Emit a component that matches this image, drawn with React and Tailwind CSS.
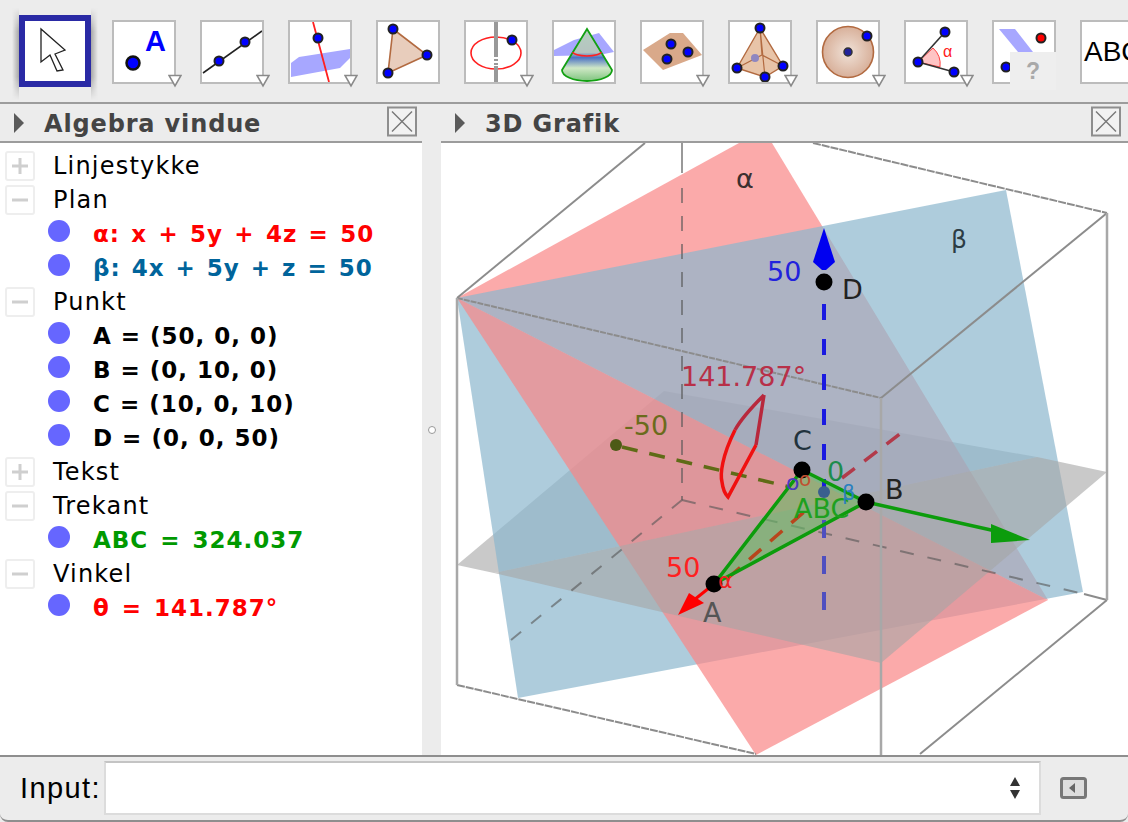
function ToolBox({ children, arrow = true, first = false }) {
  return (
    <div className={`relative w-[64px] h-[64px] shrink-0 mt-[20px] border-[2px] border-[#bcbcbc] bg-white ${first ? 'ml-[14px]' : 'ml-[24px]'}`}>
      <svg viewBox="0 0 60 60" className="w-[60px] h-[60px]">{children}</svg>
      {arrow && (
        <svg viewBox="0 0 14 14" className="absolute right-[-8px] bottom-[-6px] w-[14px] h-[14px]">
          <path d="M1 1.5H13L7 12Z" fill="#fff" stroke="#8a8a8a" strokeWidth="1.6" />
        </svg>
      )}
    </div>
  );
}

function Dot({ x, y, r = 4.5, fill = '#0000ff' }) {
  return <circle cx={x} cy={y} r={r} fill={fill} stroke="#222" strokeWidth="2" />;
}

function Tools() {
  return (
    <div className="relative h-[102px] flex items-start overflow-hidden bg-[#ececec]">
      <div className="w-[86px] h-[92px] ml-[12px] mt-[8px] shrink-0 flex items-start">
        <div className="w-[7px] h-[92px] bg-gradient-to-r from-[#ececec] to-[#a8a8a8] [mask-image:linear-gradient(to_bottom,transparent,black_25%,black_75%,transparent)]" />
        <div className="w-[72px] h-[72px] mt-[7px] shrink-0 border-[6px] border-[#2a2aa5] bg-white flex items-center justify-center">
          <svg viewBox="0 0 36 48" className="w-[36px] h-[48px]">
            <path d="M4 2V35L13 28L20 44L26 43L18 27L28 23Z" fill="#fff" stroke="#222" strokeWidth="1.3" />
          </svg>
        </div>
        <div className="w-[7px] h-[92px] bg-gradient-to-r from-[#a8a8a8] to-[#ececec] [mask-image:linear-gradient(to_bottom,transparent,black_25%,black_75%,transparent)]" />
      </div>
      <ToolBox first>
        <circle cx="19" cy="41" r="6.5" fill="#0000ff" stroke="#111" strokeWidth="2.5" />
        <text x="31" y="29" fontSize="29" fontWeight="700" fill="#0000ff" className="[font-family:'Liberation_Sans',sans-serif]">A</text>
      </ToolBox>
      <ToolBox>
        <line x1="1" y1="51" x2="60" y2="9" stroke="#222" strokeWidth="1.6" />
        <Dot x={17} y={39} />
        <Dot x={43} y={20} />
      </ToolBox>
      <ToolBox>
        <path d="M1 41L9 35L60 27V36L50 46L1 55Z" fill="#a7a7ff" />
        <line x1="23" y1="0" x2="39" y2="60" stroke="#ff2020" strokeWidth="1.8" />
        <Dot x={28} y={16} />
      </ToolBox>
      <ToolBox arrow={false}>
        <path d="M15 7L49 33L10 51Z" fill="#e8cdbc" stroke="#b26a40" strokeWidth="1.6" />
        <Dot x={15} y={7} />
        <Dot x={49} y={33} />
        <Dot x={10} y={51} />
      </ToolBox>
      <ToolBox>
        <ellipse cx="30" cy="31" rx="25" ry="16" fill="none" stroke="#ff2020" strokeWidth="1.6" />
        <line x1="30" y1="0" x2="30" y2="33" stroke="#999" strokeWidth="4" />
        <line x1="30" y1="33" x2="30" y2="44" stroke="#999" strokeWidth="4" strokeDasharray="2 2" />
        <line x1="30" y1="44" x2="30" y2="60" stroke="#999" strokeWidth="4" />
        <Dot x={46} y={18} />
      </ToolBox>
      <ToolBox arrow={false}>
        <defs>
          <linearGradient id="cone" x1="0" y1="0" x2="0" y2="1">
            <stop offset="0" stopColor="#b5cfc0" />
            <stop offset="0.45" stopColor="#b5c4c0" />
            <stop offset="0.55" stopColor="#4d73c4" />
            <stop offset="0.75" stopColor="#cfe8c6" />
            <stop offset="1" stopColor="#7fc47f" />
          </linearGradient>
        </defs>
        <path d="M0 28L20 18L45 11L60 30L45 33L0 34Z" fill="#a7a7ff" />
        <path d="M33 7L8 48A25 11 0 0 0 58 48Z" fill="url(#cone)" stroke="#12a012" strokeWidth="1.8" />
        <path d="M19 30A14 4 0 0 0 47 30" fill="none" stroke="#ff2020" strokeWidth="1.6" />
      </ToolBox>
      <ToolBox>
        <path d="M1 28L28 11H41L60 33L21 48Z" fill="#d9a98a" />
        <Dot x={29} y={22} />
        <Dot x={25} y={37} />
        <Dot x={46} y={30} />
      </ToolBox>
      <ToolBox>
        <path d="M30 6L7 46L35 55L53 44Z" fill="#e8c4a8" stroke="#b26a40" strokeWidth="1.4" />
        <path d="M7 46L32 33L53 44M30 6L32 33M30 6L35 55" fill="none" stroke="#b26a40" strokeWidth="1.2" />
        <circle cx="25" cy="36" r="4" fill="#8e86c0" />
        <Dot x={30} y={6} />
        <Dot x={7} y={46} />
        <Dot x={53} y={44} />
        <Dot x={35} y={55} />
      </ToolBox>
      <ToolBox>
        <defs>
          <radialGradient id="ball">
            <stop offset="0" stopColor="#f0e2d8" />
            <stop offset="1" stopColor="#d8b09a" />
          </radialGradient>
        </defs>
        <ellipse cx="30" cy="30" rx="25.5" ry="25.5" fill="url(#ball)" stroke="#b26a40" strokeWidth="1.6" />
        <circle cx="30" cy="30" r="4" fill="#22229a" stroke="#333" strokeWidth="1.5" />
        <Dot x={49} y={14} />
      </ToolBox>
      <ToolBox>
        <path d="M12 40L27 26A22 22 0 0 1 34 45Z" fill="#ffc4c4" stroke="#ff4040" strokeWidth="1" />
        <line x1="12" y1="40" x2="39" y2="10" stroke="#333" strokeWidth="1.6" />
        <line x1="12" y1="40" x2="48" y2="50" stroke="#333" strokeWidth="1.6" />
        <Dot x={39} y={10} />
        <Dot x={12} y={40} />
        <Dot x={48} y={50} />
        <text x="37" y="35" fontSize="16" fill="#ff2020" className="[font-family:'Liberation_Sans',sans-serif]">α</text>
      </ToolBox>
      <ToolBox arrow={false}>
        <path d="M5 7H21L39 30L36 35L24 30Z" fill="#a7a7ff" />
        <Dot x={47} y={16} fill="#ff0000" />
        <Dot x={12} y={45} />
      </ToolBox>
      <div className="relative w-[64px] h-[64px] shrink-0 mt-[20px] ml-[24px] border-[2px] border-[#bcbcbc] bg-white overflow-hidden">
        <span className="absolute left-[2px] top-[14px] text-[28px] leading-[32px] text-black [font-family:'Liberation_Sans',sans-serif]">ABC</span>
      </div>
      <div className="absolute left-[1010px] top-[52px] w-[46px] h-[38px] bg-[#eeeeee] flex items-center justify-center text-[23px] font-bold text-[#a9a9a9] [font-family:'Liberation_Sans',sans-serif]">?</div>
    </div>
  );
}

function PanelHead({ title, closeClass }) {
  return (
    <div className="relative h-[39px] flex items-center bg-[#ececec] border-b-[2px] border-[#9c9c9c]">
      <svg viewBox="0 0 10 20" className="ml-[14px] w-[10px] h-[20px]">
        <path d="M0 0L10 10L0 20Z" fill="#5a5a5a" />
      </svg>
      <span className="ml-[20px] mt-[2px] text-[24px] leading-[36px] tracking-[0.85px] font-bold text-[#444]">{title}</span>
      <svg viewBox="0 0 30 30" className={`absolute top-[2px] w-[30px] h-[31px] ${closeClass}`}>
        <rect x="1" y="1" width="28" height="28" fill="#f2f2f2" stroke="#8e8e8e" strokeWidth="2" />
        <path d="M5 5L25 25M25 5L5 25" stroke="#777" strokeWidth="1.4" />
      </svg>
    </div>
  );
}

function TreeHead({ open, label }) {
  return (
    <div className="h-[34px] flex items-center">
      <div className="ml-[5px] w-[30px] h-[30px] rounded-[3px] border-[2px] border-[#eeeeee] flex items-center justify-center">
        <svg viewBox="0 0 16 16" className="w-[16px] h-[16px]">
          <rect x="0" y="6.5" width="16" height="3" fill="#cfcfcf" />
          {!open && <rect x="6.5" y="0" width="3" height="16" fill="#cfcfcf" />}
        </svg>
      </div>
      <span className="ml-[18px] text-[24px] tracking-[1.2px] text-black">{label}</span>
    </div>
  );
}

function TreeRow({ style, text }) {
  return (
    <div className="h-[34px] flex items-center">
      <span className="ml-[48px] mb-[6px] w-[22px] h-[22px] rounded-full bg-[#6666ff]" />
      <span className={`ml-[23px] text-[23px] tracking-[1px] font-bold whitespace-nowrap ${style}`}>{text}</span>
    </div>
  );
}

function Algebra() {
  const rows = [
    ['h', false, 'Linjestykke'],
    ['h', true, 'Plan'],
    ['r', 'text-[#ff0000] [word-spacing:2.3px]', 'α: x + 5y + 4z = 50'],
    ['r', 'text-[#00649b] [word-spacing:2px]', 'β: 4x + 5y + z = 50'],
    ['h', true, 'Punkt'],
    ['r', 'text-black', 'A = (50, 0, 0)'],
    ['r', 'text-black', 'B = (0, 10, 0)'],
    ['r', 'text-black', 'C = (10, 0, 10)'],
    ['r', 'text-black', 'D = (0, 0, 50)'],
    ['h', false, 'Tekst'],
    ['h', true, 'Trekant'],
    ['r', 'text-[#009900] [word-spacing:3px]', 'ABC = 324.037'],
    ['h', true, 'Vinkel'],
    ['r', 'text-[#ff0000] [word-spacing:3px]', 'θ = 141.787°'],
  ];
  return (
    <div className="h-[612px] bg-white pt-[6px] overflow-hidden">
      {rows.map((r) =>
        r[0] === 'h' ? <TreeHead key={r[2]} open={r[1]} label={r[2]} /> : <TreeRow key={r[2]} style={r[1]} text={r[2]} />
      )}
    </div>
  );
}

function Scene() {
  return (
    <svg viewBox="441 143 687 612" className="block w-[687px] h-[612px] bg-white">
      {/* planes: each one is split where they cut through each other */}
      <polygon points="457,565 664,391 1037,457 494,573" fill="#a5a5a5" fillOpacity="0.6" />
      <polygon points="457,298 739,143 772,143 1048,600" fill="#f87171" fillOpacity="0.6" />
      <polygon points="457,298 1006,190 1083,592 518,698" fill="#8bb6cd" fillOpacity="0.7" />
      <polygon points="457,298 1048,600 756,755" fill="#f98686" fillOpacity="0.7" />
      <polygon points="494,573 1037,457 1107,472 881,663" fill="#a5a5a5" fillOpacity="0.6" />

      {/* box */}
      <g stroke="#555" strokeOpacity="0.6" strokeWidth="2" fill="none">
        <line x1="682" y1="143" x2="682" y2="173" />
        <line x1="682" y1="188" x2="682" y2="500" strokeDasharray="15 13" />
        <line x1="682" y1="500" x2="505" y2="645" strokeDasharray="13 13" />
        <line x1="682" y1="500" x2="1084" y2="594" strokeDasharray="14 14" />
      </g>
      <g stroke="#8c8c8c" strokeWidth="2" fill="none">
        <line x1="457" y1="298" x2="881" y2="398" strokeDasharray="6 1" />
        <line x1="457" y1="298" x2="645" y2="143" />
        <line x1="813" y1="143" x2="1107" y2="213" strokeDasharray="8 1" />
        <line x1="881" y1="398" x2="1107" y2="213" />
        <line x1="457" y1="685" x2="756" y2="754" strokeDasharray="8 1" />
        <line x1="1107" y1="600" x2="920" y2="754" />
        <line x1="1107" y1="600" x2="1084" y2="594" />
      </g>
      <g stroke="#a8a8a8" strokeWidth="2.5" fill="none">
        <line x1="457" y1="298" x2="457" y2="685" />
        <line x1="881" y1="398" x2="881" y2="755" />
        <line x1="1107" y1="213" x2="1107" y2="600" />
      </g>

      {/* triangle fill lies under the axes */}
      <polygon points="802,470 866,502 714,584" fill="#66bb66" fillOpacity="0.6" />

      {/* axes */}
      <line x1="824" y1="304" x2="824" y2="500" stroke="#1a1ae0" strokeWidth="4" strokeDasharray="16 19" />
      <line x1="824" y1="610" x2="824" y2="510" stroke="#4f4fc0" strokeWidth="4" strokeDasharray="18 18" />
      <path d="M824 228L835 262L826 270H822L813 262Z" fill="#0000f0" />
      <line x1="622" y1="447" x2="790" y2="487" stroke="#5f6b16" strokeWidth="3.5" strokeDasharray="16 12" />
      <circle cx="616" cy="445" r="6" fill="#4d5a16" />
      <line x1="728" y1="578" x2="812" y2="505" stroke="#b8451c" strokeWidth="3.5" strokeDasharray="16 12" />
      <line x1="842" y1="478" x2="905" y2="430" stroke="#b23a4a" strokeWidth="3.5" strokeDasharray="16 12" />
      <line x1="866" y1="502" x2="1000" y2="532" stroke="#0c9c0c" strokeWidth="3.5" />
      <polygon points="991,524 1030,540 991,543" fill="#0c9c0c" />
      <line x1="714" y1="584" x2="694" y2="600" stroke="#ff0000" strokeWidth="3" />
      <polygon points="678,615 689,593 704,603" fill="#ff0000" />
      <circle cx="824" cy="492" r="6" fill="#3a5f8e" />

      <polygon points="802,470 866,502 714,584" fill="none" stroke="#0c9c0c" strokeWidth="3.5" strokeLinejoin="round" />

      {/* angle */}
      <path d="M764 395L756 445M764 395C752 407 741 419 735 430" fill="none" stroke="#b8283c" strokeWidth="3.5" />
      <path d="M735 430C722 456 720 474 722 482C723 490 725 494 728 497L756 445" fill="none" stroke="#f01010" strokeWidth="3.5" />

      {/* points */}
      <circle cx="824" cy="282" r="8.5" fill="#000" />
      <circle cx="802" cy="470" r="8.5" fill="#000" />
      <circle cx="866" cy="502" r="8.5" fill="#000" />
      <circle cx="714" cy="584" r="8.5" fill="#000" />

      {/* labels */}
      <g fontSize="27">
        <text x="736" y="188" fill="#3c3030">α</text>
        <text x="951" y="248" fontSize="25" fill="#2c3c44">β</text>
        <text x="767" y="281" fill="#2222dd">50</text>
        <text x="842" y="299" fill="#222">D</text>
        <text x="681" y="386" fill="#b83048">141.787°</text>
        <text x="624" y="435" fill="#6b6b1c">-50</text>
        <text x="793" y="450" fill="#22323c">C</text>
        <text x="885" y="499" fill="#222">B</text>
        <text x="666" y="577" fill="#ff2020">50</text>
        <text x="703" y="622" fill="#555">A</text>
        <text x="794" y="518" fill="#1ea01e">ABC</text>
        <text x="827" y="481" fill="#1e8c4e">0</text>
        <text x="786" y="490" fontSize="22" fill="#4a3ac0">o</text>
        <text x="799" y="486" fontSize="20" fill="#c05030">o</text>
        <text x="842" y="500" fontSize="21" fill="#2a80c0">β</text>
        <text x="718" y="588" fontSize="22" fill="#f02020">α</text>
      </g>
    </svg>
  );
}

function InputBar() {
  return (
    <div className="relative h-[67px] flex items-center bg-[#ececec] border-t-[2px] border-b-[2px] border-[#8e8e8e] rounded-b-[8px]">
      <span className="ml-[20px] text-[29px] tracking-[1.4px] text-black [font-family:'Liberation_Sans',sans-serif]">Input:</span>
      <div className="absolute left-[104px] top-[4px] w-[937px] h-[54px] bg-white border-[2px] border-[#dcdcdc] border-t-[#c4c4c4] flex items-center justify-end pr-[17px]">
        <svg viewBox="0 0 14 24" className="w-[14px] h-[24px]">
          <path d="M7 1L12 10H2Z M2 14H12L7 23Z" fill="#333" />
        </svg>
      </div>
      <svg viewBox="0 0 27 22" className="absolute left-[1060px] top-[20px] w-[27px] h-[22px]">
        <rect x="1.5" y="1.5" width="24" height="19" rx="2" fill="#dddddd" stroke="#777" strokeWidth="3" />
        <path d="M9 11L15 6V16Z" fill="#666" />
      </svg>
    </div>
  );
}

export default function App() {
  return (
    <div className="w-[1128px] h-[822px] overflow-hidden bg-[#ececec] [font-family:'DejaVu_Sans',sans-serif]">
      <Tools />
      <div className="h-[2px] bg-[#9c9c9c]" />
      <div className="flex h-[651px]">
        <div className="w-[422px]">
          <PanelHead title="Algebra vindue" closeClass="right-[5px]" />
          <Algebra />
        </div>
        <div className="w-[19px] bg-[#ececec] flex items-center justify-center">
          <span className="w-[8px] h-[8px] rounded-full border border-[#999] bg-white" />
        </div>
        <div className="w-[687px]">
          <PanelHead title="3D Grafik" closeClass="right-[7px]" />
          <Scene />
        </div>
      </div>
      <InputBar />
    </div>
  );
}
